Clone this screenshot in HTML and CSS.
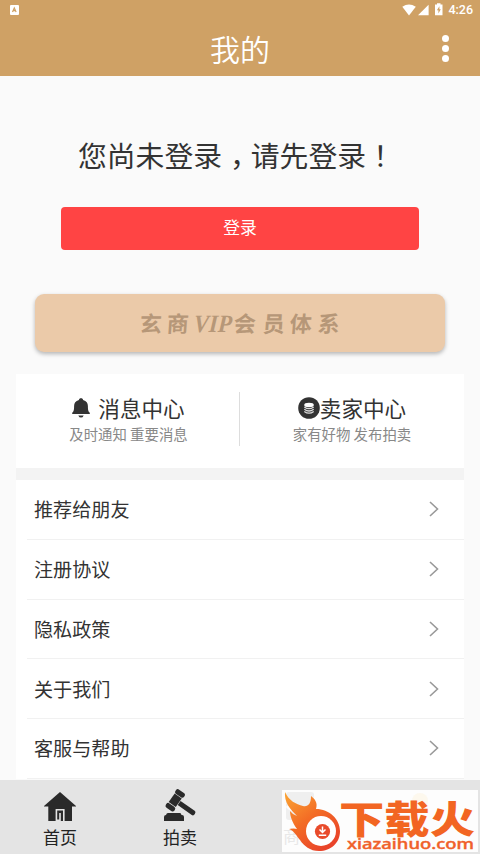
FILE: index.html
```html
<!DOCTYPE html>
<html lang="zh-CN">
<head>
  <meta charset="UTF-8">
  <title>我的</title>
  <link rel="stylesheet" href="styles.css">
</head>
<body>

  <header class="header">
    <div class="status">
      <svg class="status-app" width="9" height="10" viewBox="0 0 9 10">
        <rect width="9" height="10" rx="1" fill="#fff"/>
        <path d="M2.5 7L4.3 3L6.1 7M3.2 5.7H5.4" fill="none" stroke="#cfa165" stroke-width="1.2"/>
      </svg>
      <svg class="status-icons" width="42" height="14" viewBox="0 0 42 14">
        <path d="M0.3 3.8Q7 -0.7 13.8 3.8L7 12.5Z" fill="#fff"/>
        <path d="M16 12.3L26.6 1.7V12.3Z" fill="#fff"/>
        <path d="M33 1.5H35V0.3H38.5V1.5H40.5V12.2H33Z" fill="#fff"/>
        <path d="M37.4 3.2L34.9 7.2H36.4V10.5L38.8 6.3H37.4Z" fill="#cfa165"/>
      </svg>
      <span class="time">4:26</span>
    </div>
    <div class="title-bar">
      <h1>我的</h1>
      <div class="more"><i></i><i></i><i></i></div>
    </div>
  </header>

  <main class="content">
    <p class="tip">您尚未登录<span class="comma">，</span>请先登录<span class="mark" lang="zh-TW">！</span></p>
    <button class="login">登录</button>

    <div class="vip">
      <svg width="410" height="58" viewBox="0 0 410 58">
        <g fill="#b69778" transform="skewX(-4)">
          <text class="vip-cn" y="38" x="107 134">玄商</text>
          <text class="vip-en" y="38" x="161" textLength="38" lengthAdjust="spacingAndGlyphs">VIP</text>
          <text class="vip-cn" y="38" x="201 230 257 285">会员体系</text>
        </g>
      </svg>
    </div>

    <section class="centers">
      <div class="center">
        <div class="center-name">
          <svg class="bell" width="18" height="20" viewBox="0 0 18 20">
            <path d="M9 0.2C10.2 0.2 11 0.9 11.1 1.9C14.5 2.7 15.9 5.2 15.9 8C15.9 12 16.2 13.3 17.8 14.8V16H0.2V14.8C1.8 13.3 2.1 12 2.1 8C2.1 5.2 3.5 2.7 6.9 1.9C7 0.9 7.8 0.2 9 0.2ZM6.3 17.4H11.7Q10.8 19.6 9 19.6T6.3 17.4Z" fill="#333"/>
          </svg>
          <span>消息中心</span>
        </div>
        <div class="center-desc">及时通知 重要消息</div>
      </div>
      <div class="center">
        <div class="center-name">
          <svg width="22" height="22" viewBox="0 0 22 22">
            <circle cx="11" cy="11" r="10.8" fill="#333"/>
            <ellipse cx="11" cy="8" rx="4.8" ry="2.2" fill="#fff"/>
            <path d="M6.3 10Q11 13.4 15.7 10M6.3 12.3Q11 15.7 15.7 12.3M6.3 14.5Q11 17.9 15.7 14.5" fill="none" stroke="#ddd" stroke-width="1.3"/>
          </svg>
          <span>卖家中心</span>
        </div>
        <div class="center-desc">家有好物 发布拍卖</div>
      </div>
    </section>

    <ul class="menu">
      <li><span>推荐给朋友</span><svg width="10" height="16" viewBox="0 0 10 16"><path d="M1 1L8.5 8L1 15"/></svg></li>
      <li><span>注册协议</span><svg width="10" height="16" viewBox="0 0 10 16"><path d="M1 1L8.5 8L1 15"/></svg></li>
      <li><span>隐私政策</span><svg width="10" height="16" viewBox="0 0 10 16"><path d="M1 1L8.5 8L1 15"/></svg></li>
      <li><span>关于我们</span><svg width="10" height="16" viewBox="0 0 10 16"><path d="M1 1L8.5 8L1 15"/></svg></li>
      <li><span>客服与帮助</span><svg width="10" height="16" viewBox="0 0 10 16"><path d="M1 1L8.5 8L1 15"/></svg></li>
    </ul>
  </main>

  <nav class="tabs">
    <div class="tab">
      <svg width="34" height="34" viewBox="0 0 34 34">
        <path d="M17 3L33 17V17.5H29V32H5.3V17.5H1V17Z" fill="#2a2a2a"/>
        <path d="M20.8 32V20.8H13.4V31.2H17V24" fill="none" stroke="#e4e4e4" stroke-width="1.6"/>
      </svg>
      <span>首页</span>
    </div>
    <div class="tab">
      <svg width="34" height="34" viewBox="0 0 34 34">
        <g fill="#2a2a2a">
          <g transform="translate(12.2 11.3) rotate(35)">
            <rect x="-5.2" y="-11" width="10.4" height="5.2" rx="2.3"/>
            <rect x="-4.3" y="-5.2" width="8.6" height="10.4"/>
            <rect x="-5.2" y="5.8" width="10.4" height="5.2" rx="2.3"/>
            <path d="M4.8 -2.5H22Q24 -2.5 24 0T22 2.5H4.8Z"/>
          </g>
          <path d="M5 24H17Q18 24 18.5 26H19Q21 26 21 28V32H1V28Q1 26 3 26Q3.5 24 5 24Z"/>
        </g>
      </svg>
      <span>拍卖</span>
    </div>
    <div class="tab"></div>
    <div class="tab"></div>
  </nav>

  <!-- download site badge over the tab bar -->
  <div class="badge">
    <svg width="196" height="62" viewBox="0 0 196 62">
      <defs>
        <linearGradient id="flame" x1="0" y1="0" x2="0.7" y2="1">
          <stop offset="0" stop-color="#fba634"/>
          <stop offset="0.5" stop-color="#f36c25"/>
          <stop offset="1" stop-color="#e9432a"/>
        </linearGradient>
      </defs>
      <g opacity="0.05">
        <rect x="4" y="2" width="28" height="28" rx="3"/>
        <path d="M5 16Q10 23 16 17Q22 23 30 16" fill="none" stroke="#fff" stroke-width="3"/>
      </g>
      <circle cx="138" cy="11" r="8" fill="#fdf3dd" opacity="0.5"/>
      <text class="badge-ghost" x="1" y="53">商城</text>
      <path d="M3 2C7 11 14 14 21 16C26 17 29 14 29 6C33 9 36 13 34 19C47 19 58 29 58 41C58 53 49 61 37 61C28 61 22 56 18 50C14 45 12 41 7 39Q12 38 15 39C10 32 8 26 8 21Q11 25 15 26C8 19 2 12 3 2Z" fill="url(#flame)"/>
      <circle cx="39" cy="41" r="15" fill="#fff"/>
      <circle cx="40.5" cy="41.5" r="7.6" fill="#e94b2b"/>
      <path d="M40.5 36.5V42M37.5 39.5L40.5 42.5L43.5 39.5M36.8 45.3H44.2" fill="none" stroke="#fff" stroke-width="1.5"/>
      <text class="badge-cn" x="57" y="43" textLength="136" lengthAdjust="spacingAndGlyphs">下载火</text>
      <text class="badge-en" x="65" y="59" textLength="127" lengthAdjust="spacingAndGlyphs">xiazaihuo.com</text>
    </svg>
  </div>

</body>
</html>
```

FILE: styles.css
```css
* {
  box-sizing: border-box;
}

body {
  margin: 0;
  width: 480px;
  height: 854px;
  overflow: hidden;
  display: flex;
  flex-direction: column;
  position: relative;
  background: #fafafa;
  color: #333;
  font-family: "Noto Sans CJK SC", sans-serif;
}

.header {
  height: 76px;
  flex: none;
  background: #cfa165;
  color: #fff;
}

.status {
  height: 20px;
  display: flex;
  align-items: center;
  padding: 0 7px 0 10px;
}

.status-icons {
  margin-left: auto;
  margin-right: 4px;
}

.time {
  font: 500 12.5px/20px Roboto, sans-serif;
}

.title-bar {
  height: 56px;
  display: flex;
  align-items: center;
  padding: 0 31px 0 38px;
}

.title-bar h1 {
  flex: 1;
  margin: 0;
  padding-bottom: 1px;
  text-align: center;
  font-size: 30px;
  font-weight: 350;
  line-height: 54px;
}

.more {
  width: 7px;
  display: flex;
  flex-direction: column;
  gap: 3px;
}

.more i {
  width: 7px;
  height: 7px;
  border-radius: 50%;
  background: #fff;
}

.content {
  flex: 1;
  min-height: 0;
  overflow: hidden;
  padding: 0 16px;
}

.tip {
  margin: 58px 0 31px;
  padding-left: 62px;
  font-size: 28.8px;
  line-height: 42px;
  white-space: nowrap;
}

/* centre the comma in its cell */
.comma {
  display: inline-block;
  width: 1em;
  padding-left: 8px;
  overflow: hidden;
  vertical-align: top;
}

.mark {
  font-family: "Noto Sans CJK TC", sans-serif;
}

.login {
  display: block;
  width: 358px;
  height: 43px;
  margin: 0 auto;
  padding: 0 0 3px;
  border: none;
  border-radius: 4px;
  background: #ff4444;
  color: #fff;
  font-family: inherit;
  font-size: 16.8px;
}

.vip {
  width: 410px;
  height: 58px;
  margin: 44px auto 22px;
  border-radius: 9px;
  background: #ebcaa9;
  box-shadow: 0 2px 4px rgba(0, 0, 0, 0.28);
}

.vip svg {
  display: block;
}

.vip-cn {
  font-size: 22px;
  font-weight: 700;
}

.vip-en {
  font: italic bold 25px "Liberation Serif", serif;
}

.centers {
  display: flex;
  height: 106px;
  padding-top: 18px;
  background: #fff;
  border-bottom: 12px solid #f3f3f3;
}

.center {
  width: 224px;
  height: 54px;
  text-align: center;
}

.center:first-child {
  padding-left: 2px;
  border-right: 1px solid #ddd;
}

.center-name {
  display: flex;
  justify-content: center;
  align-items: center;
  height: 32px;
  font-size: 21.6px;
}

.center-name span {
  line-height: 32px;
  padding-bottom: 1px;
}

.bell {
  margin-right: 8px;
}

.center-desc {
  font-size: 14.4px;
  line-height: 20px;
  color: #888;
}

.menu {
  margin: 0;
  padding: 0 0 0 11px;
  list-style: none;
  background: #fff;
}

.menu li {
  display: flex;
  align-items: center;
  justify-content: space-between;
  height: 59.75px;
  padding: 0 25px 0 7px;
  border-bottom: 1px solid #f1f1f1;
  font-size: 19.1px;
}

.menu path {
  fill: none;
  stroke: #999;
  stroke-width: 1.6;
}

.tabs {
  flex: none;
  display: flex;
  height: 74px;
  background: #e4e4e4;
  color: #222;
}

.tab {
  flex: 1;
  display: flex;
  flex-direction: column;
  align-items: center;
  padding-top: 9px;
  font-size: 17px;
  line-height: 27px;
}

.badge {
  position: absolute;
  left: 282px;
  top: 790px;
  width: 196px;
  height: 62px;
  background: #fdfdfd;
}

.badge svg {
  display: block;
}

.badge-ghost {
  font-size: 17px;
  fill: #e8e8e8;
}

.badge-cn {
  font-size: 38px;
  font-weight: 900;
  fill: #f26522;
}

.badge-en {
  font: 500 14px "Noto Sans", sans-serif;
  fill: #f0602a;
  stroke: #f0602a;
  stroke-width: 0.4;
}
```
